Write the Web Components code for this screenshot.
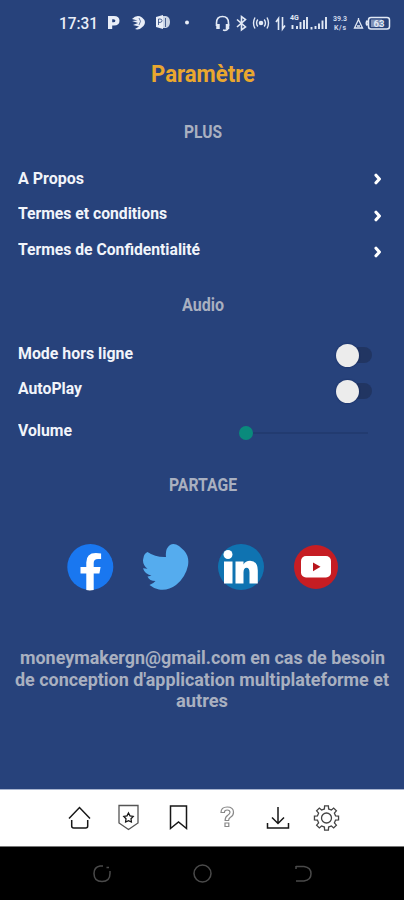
<!DOCTYPE html>
<html lang="fr">
<head>
<meta charset="utf-8">
<title>Paramètre</title>
<style>
html,body{margin:0;height:100%;overflow:hidden;background:#27427b}
</style>
</head>
<body>
<settings-app></settings-app>
<script>
const define = (name, html, init) => {
  const t = document.createElement('template');
  t.innerHTML = html;
  customElements.define(name, class extends HTMLElement {
    connectedCallback() {
      if (this.shadowRoot) return;
      this.attachShadow({mode: 'open'}).append(t.content.cloneNode(true));
      if (init) init(this, this.shadowRoot);
    }
  });
};

/* Text condensed or widened horizontally to a given width */
define('fit-text', `<style>
:host{display:inline-block;white-space:nowrap;text-align:left}
span{display:inline-block;transform-origin:0 50%}
</style><span></span>`, (el, root) => {
  const s = root.querySelector('span');
  const w = +el.getAttribute('width');
  s.textContent = el.getAttribute('text');
  const natural = s.getBoundingClientRect().width;
  el.style.width = w + 'px';
  s.style.transform = 'scaleX(' + w / natural + ')';
});

define('status-bar', `<style>
:host{display:flex;height:46px;box-sizing:border-box;padding-left:59px;align-items:center;color:#e9eef8;font-size:16px}
svg{display:block}
.l{width:154px;display:flex;align-items:center}
</style>
<div class="l"><fit-text text="17:31" width="39"></fit-text>
<svg width="95" height="24" viewBox="98 12 95 24" fill="#e9eef8">
<path fill-rule="evenodd" d="M108 17h6q5.500 0 5.500 4.700t-5.500 4.700h-1.800v3.600H108zm4.200 3.200v3h1.200q2 0 2-1.500t-2-1.500z"/>
<path d="M132 20q5-5 10-1.500 5 4 1.500 8.500-4 4.500-8.500 3l4-2.500-6-1.500 5-2-6-2 5.500-.5z"/><path d="M139 19q3 3 0 7" stroke="#27427b" stroke-width=".7" fill="none"/>
<path d="M156 18l7-2v14l-7-2z"/><path d="M163 17h3q4 1 4 6t-4 6h-3z" opacity=".85"/><path d="M158.500 26v-6h1.500q2 0 2 1.700t-2 1.700h-1.500M165.500 19v9" stroke="#27427b" stroke-width=".8" fill="none"/>
<circle cx="187" cy="23.500" r="2"/></svg></div>
<svg width="184" height="26" viewBox="213 10 184 26" fill="none" stroke="#e2e9f5" stroke-width="1.600" font-family="Roboto,sans-serif">
<path d="M216.500 26v-3q0-6.500 6-6.500t6 6.500v3"/><path d="M218 24v5M227.500 24v5" stroke-width="3.500"/><path d="M228 29q-2 2-5 1"/>
<path d="M237 19.500l8.500 7.500-4 3V16.500l4 3-8.500 7.500"/>
<circle cx="261" cy="23" r="1.500" fill="#e2e9f5"/><path d="M257.800 19.500q-2.500 3.500 0 7m6.400-7q2.500 3.500 0 7M255 17.500q-3 5.500 0 11m12-11q3 5.500 0 11" stroke-width="1.400"/>
<path d="M276 22l2.500-3.500V30M282.500 17v12l2.500-3.500"/>
<text x="290" y="20" font-size="7" font-weight="700" fill="#e2e9f5" stroke="none">4G</text>
<path d="M292.500 25v4M297 26v3M300.500 22v7M304 20v9M307 17v12" stroke-width="1.900"/>
<path d="M311.500 27v2.500M315.500 26v3M319 23.500v5.500M322.500 20.500v8.500M326 17v12" stroke-width="1.900"/>
<g fill="#cfd8ea" stroke="none" font-size="7" font-weight="700"><text x="333" y="21" textLength="14">39.3</text><text x="334" y="30" textLength="12">K/s</text></g>
<path d="M354.500 28l4-8.500 4 8.500zM357 26h3M358.500 20v-2" stroke-width="1.300"/>
<rect x="368.500" y="17.500" width="21" height="11.500" rx="2.500" stroke-width="1.500"/><path d="M371 19.500h11v7.500h-11z" fill="#7f90b6" stroke="none"/><path d="M367.500 20.500q-2 2.500 0 5" stroke-width="2"/>
<text x="373.500" y="26.800" font-size="9.500" font-weight="700" fill="#e2e9f5" stroke="none">63</text>
</svg>`);

define('section-title', `<style>
:host{display:flex;justify-content:center;align-items:center;height:24px;padding-left:2px;color:#a9b0c0;font-size:18px}
</style><slot></slot>`);

define('setting-row', `<style>
:host{display:flex;justify-content:space-between;height:24px;line-height:24px;padding-left:18px;color:#f1f4fa;font-size:16px}
</style><fit-text></fit-text><slot></slot>`, (el, root) => {
  const f = document.createElement('fit-text');
  f.setAttribute('text', el.getAttribute('label'));
  f.setAttribute('width', el.getAttribute('width'));
  root.querySelector('fit-text').replaceWith(f);
});

define('row-chevron', `<style>:host{display:block;width:8px;height:12px;margin:8px 22px 0 0}svg{display:block}</style>
<svg width="8" height="12"><path d="M2 2.200L5.400 6 2 9.800" fill="none" stroke="#fff" stroke-width="3.100" stroke-linecap="round" stroke-linejoin="round"/></svg>`);

define('toggle-switch', `<style>
:host{display:flex;align-items:center;width:38px;height:24px;margin:1px 30px 0 0}
i{width:23px;height:23px;border-radius:50%;background:#ececec;box-shadow:0 0 2px #10265c;z-index:1}
b{width:25px;height:16px;border-radius:8px;background:#213562;margin-left:-12px}
</style><i></i><b></b>`);

define('volume-slider', `<style>
:host{display:flex;align-items:center;width:129px;height:24px;margin:2px 36px 0 0}
i{width:14px;height:14px;border-radius:50%;background:#0a8a7c}
b{flex:1;height:2px;background:#223b70}
</style><i></i><b></b>`);

define('share-links', `<style>
:host{display:flex;height:48px;padding-left:66px;gap:27px}svg{display:block;width:48px;height:48px}
</style>
<svg viewBox="66 543 48 48"><circle cx="90.300" cy="567" r="23" fill="#1977f0"/><path d="M86.300 590v-16.500h-5.800V567h5.800v-4.500q0-9.500 9.500-9.500 3 0 5.300.5v5.500h-3q-4.400 0-4.400 4V567h6.900l-1.200 6.500h-5.700V590q-4 .8-7.400 0z" fill="#fff"/></svg>
<svg viewBox="141 543 48 48"><path d="M147.500 552q8 5.500 18.500 5-1-8.500 4-12 4-2.500 9 1l5 4.500q5.500 6 4 15-2.500 12-12 19.500-8 6-17 4.500-5-.8-9.500-4.500 4-1.500 6-4-6 0-8-4.500l4-.8q-7-2-8.500-7.500l4.500.5q-6-5-4-11 .5-4 4-5.700z" fill="#55acee"/></svg>
<svg viewBox="216 543 48 48"><circle cx="241" cy="567" r="23" fill="#0f73b1"/><g fill="#fff"><circle cx="228" cy="554.500" r="4.500"/><path d="M224 561.500h8.500v22h-8.500zM235.500 561.500h8v3q2-3.700 6.500-3.700 7.800 0 7.800 9.700v13h-8.300V572.500q0-4.700-2.900-4.700-3.100 0-3.100 4.700v11h-8z"/></g></svg>
<svg viewBox="291 543 48 48"><circle cx="316" cy="567" r="22" fill="#c61d23"/><rect x="301" y="556" width="30" height="21.500" rx="5" fill="#fff"/><path d="M313 562.500l7.500 4.300-7.500 4.400z" fill="#b9161d"/></svg>`);

define('contact-note', `<style>
:host{display:flex;flex-direction:column;align-items:center;color:#a9b0c0;font-size:18px;line-height:21.500px}
</style><fit-text text="moneymakergn@gmail.com en cas de besoin" width="365"></fit-text><fit-text text="de conception d'application multiplateforme et" width="374"></fit-text><fit-text text="autres" width="52"></fit-text>`);

define('tab-bar', `<style>
:host{display:flex;height:58px;box-sizing:border-box;background:#fff;border-bottom:1px solid #777;border-top:1px solid #a8b4cf;padding:13px 0 0 66px;gap:21.400px}
svg{display:block;width:28px;height:30px;fill:none;stroke:#171717;stroke-width:1.500}
</style>
<svg viewBox="66 803 28 30"><path d="M69 818.500l10.500-11 10.500 11M71.700 820v6q0 2 2 2h12q2 0 2-2v-6"/></svg>
<svg viewBox="115 803 28 30"><path d="M119 805.500h19v17.500l-9.500 6.500-9.500-6.500z" stroke="#555" stroke-width="1.300"/><path d="M128.500 813l1.500 2.800 3.200.6-2.200 2.400.4 3.200-2.900-1.300-2.900 1.300.4-3.200-2.200-2.400 3.200-.6z" stroke-width="1.300"/></svg>
<svg viewBox="165 803 28 30"><path d="M170.500 806h16v22.500l-8-6.500-8 6.500z"/></svg>
<svg viewBox="214 803 28 30"><path d="M221 812.500q0-5.500 6.200-5.500t6.300 5.200q0 3.200-3 5-1.900 1.100-1.900 3.300h-3.500q0-3.500 2.700-5.200 2.200-1.400 2.200-3 0-2.300-2.800-2.300t-2.800 2.500zM225 823h3.800v3.500H225z" stroke="#888" stroke-width="1.200"/></svg>
<svg viewBox="263.500 803 28 30"><path d="M277.500 807v16M271.500 817.500l6 6 6-6M267 823v5h21v-5"/></svg>
<svg viewBox="313 803 28 30"><path id="gear" stroke="#444" stroke-width="1.300"/><circle cx="326.500" cy="818" r="5" stroke="#444" stroke-width="1.300"/></svg>`, (el, root) => {
  let d = '';
  for (let i = 0; i < 8; i++) {
    for (const [r, a] of [[9.3, -13], [12.2, -9], [12.2, 9], [9.3, 13]]) {
      const q = (i * 45 + a) * Math.PI / 180;
      d += (d ? 'L' : 'M') + (326.5 + r * Math.cos(q)).toFixed(2) + ' ' + (818 + r * Math.sin(q)).toFixed(2);
    }
  }
  root.getElementById('gear').setAttribute('d', d + 'z');
});

define('system-nav', `<style>
:host{display:flex;height:53px;background:#000;padding-left:90px;gap:77px}
svg{display:block;width:24px;height:53px;fill:none;stroke:#4a4a4a;stroke-width:1.500}
</style>
<svg viewBox="90 847 24 53"><path d="M103 866h-3q-6 1-6 7.500 0 8 8 8t8-8v-2.500M106.500 867.500h2.500"/></svg>
<svg viewBox="191 847 24 53"><circle cx="202.500" cy="873.500" r="8.500"/></svg>
<svg viewBox="292 847 24 53"><path d="M296 866.500h8q7 1 7 7.200t-7 7.300h-8M296 866v3"/></svg>`);

define('settings-app', `<style>
:host{display:flex;flex-direction:column;width:404px;height:900px;background:#27427b;font-family:Roboto,sans-serif;font-weight:700}
h1{margin:12px 0 0;height:32px;line-height:32px;font-size:24px;color:#e9a72f;text-align:center;padding-left:2px}
main{flex:1;display:flex;flex-direction:column}
.a{margin-top:29px}.b{margin-top:24px}.c{margin-top:11px}.d{margin-top:12px}.e{margin-top:30px}.f{margin-top:26px}.g{margin-top:18px}.h{margin-top:29px}
.b row-chevron{margin-top:6px}
.auto toggle-switch{margin-top:2px}
share-links{margin-top:47px}contact-note{margin-top:56px}
status-bar{font-weight:500}
</style>
<status-bar></status-bar>
<main>
<h1><fit-text text="Paramètre" width="104"></fit-text></h1>
<section-title class="a"><fit-text text="PLUS" width="38"></fit-text></section-title>
<setting-row class="b" label="A Propos" width="66"><row-chevron></row-chevron></setting-row>
<setting-row class="c" label="Termes et conditions" width="149"><row-chevron></row-chevron></setting-row>
<setting-row class="d" label="Termes de Confidentialité" width="182"><row-chevron></row-chevron></setting-row>
<section-title class="e"><fit-text text="Audio" width="42"></fit-text></section-title>
<setting-row class="f" label="Mode hors ligne" width="115"><toggle-switch></toggle-switch></setting-row>
<setting-row class="c auto" label="AutoPlay" width="64"><toggle-switch></toggle-switch></setting-row>
<setting-row class="g" label="Volume" width="54"><volume-slider></volume-slider></setting-row>
<section-title class="h"><fit-text text="PARTAGE" width="68"></fit-text></section-title>
<share-links></share-links>
<contact-note></contact-note>
</main>
<tab-bar></tab-bar>
<system-nav></system-nav>`);
</script>
</body>
</html>
